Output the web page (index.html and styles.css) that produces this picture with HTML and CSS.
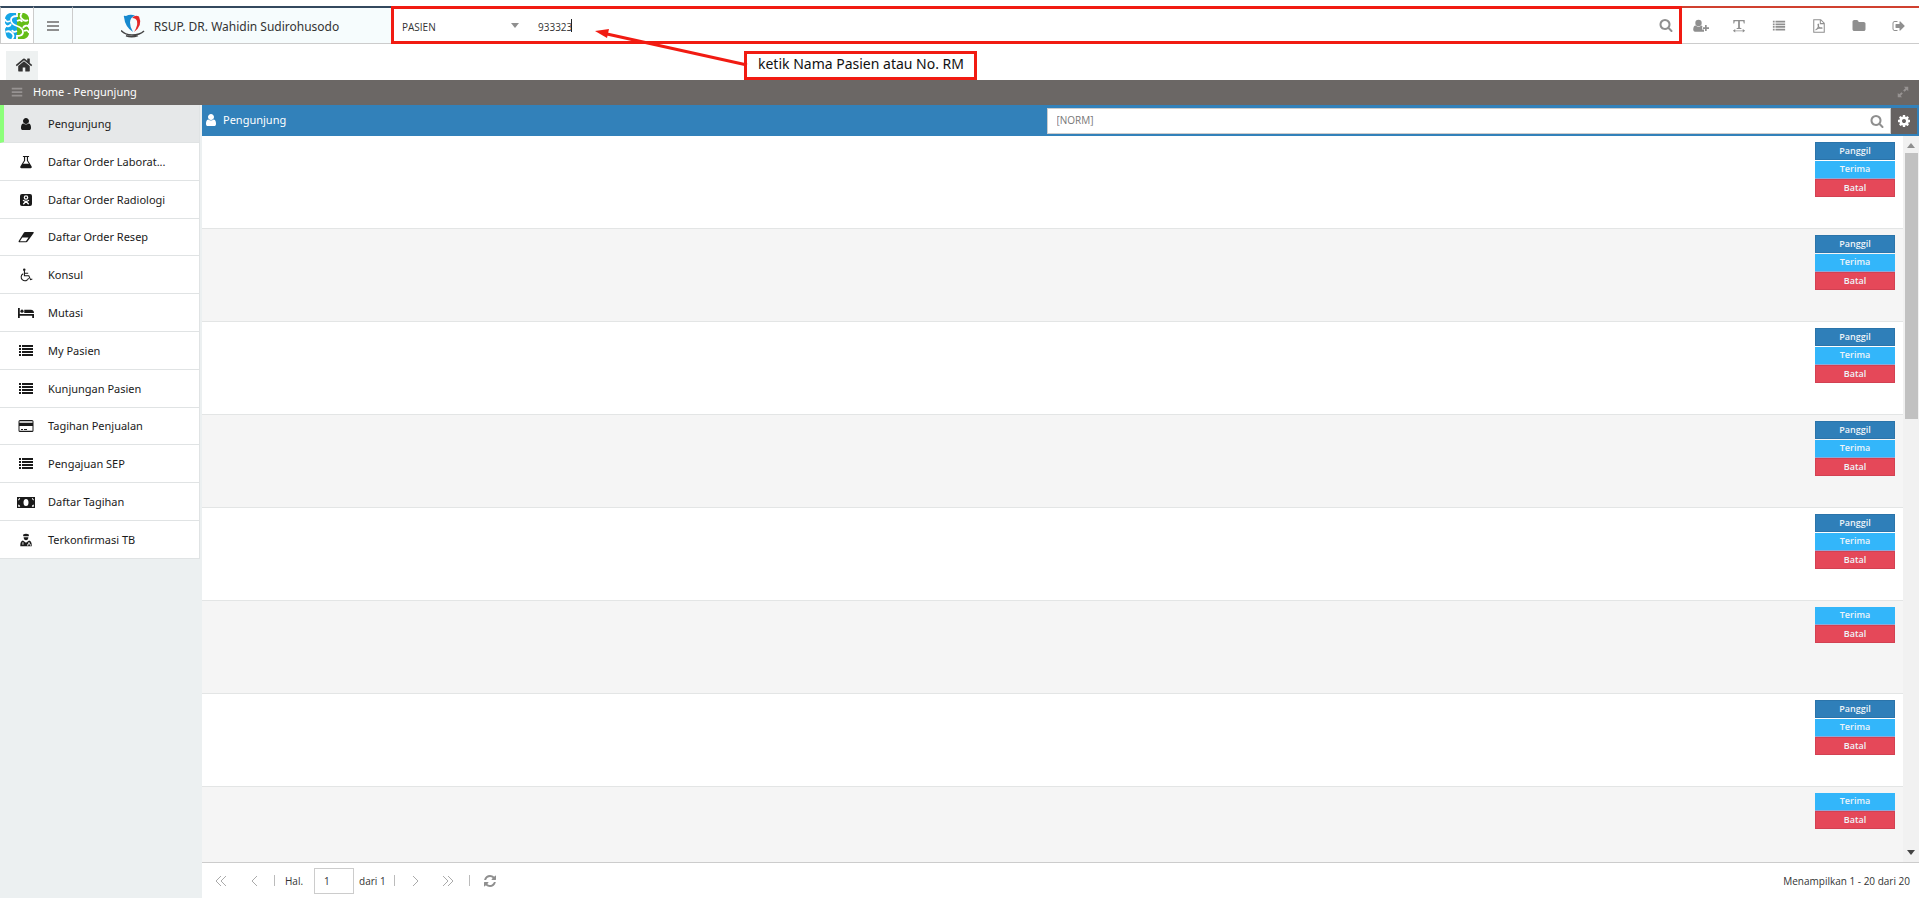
FILE: index.html
```html
<!DOCTYPE html>
<html lang="id">
<head>
<meta charset="utf-8">
<title>Home - Pengunjung</title>
<link rel="stylesheet" href="styles.css">
</head>
<body>
<svg class="sprite" aria-hidden="true">
  <symbol id="user" viewBox="0 0 1792 1792"><path d="M1536 1399q0 109-62.5 187t-150.5 78h-854q-88 0-150.5-78t-62.5-187q0-85 8.5-160.5t31.5-152 58.5-131 94-89 134.5-34.5q131 128 313 128t313-128q76 0 134.5 34.5t94 89 58.5 131 31.5 152 8.5 160.5zm-256-887q0 159-112.5 271.5t-271.5 112.5-271.5-112.5-112.5-271.5 112.5-271.5 271.5-112.5 271.5 112.5 112.5 271.5z"/></symbol>
  <symbol id="search" viewBox="0 0 1792 1792"><path d="M1216 832q0-185-131.5-316.5t-316.5-131.5-316.5 131.5-131.5 316.5 131.5 316.5 316.5 131.5 316.5-131.5 131.5-316.5zm512 832q0 52-38 90t-90 38q-54 0-90-38l-343-342q-179 124-399 124-143 0-273.5-55.5t-225-150-150-225-55.5-273.5 55.5-273.5 150-225 225-150 273.5-55.5 273.5 55.5 225 150 150 225 55.5 273.5q0 220-124 399l343 343q37 37 37 90z"/></symbol>
  <symbol id="home" viewBox="0 0 1792 1792"><path d="M1472 992v480q0 26-19 45t-45 19h-384v-384h-256v384h-384q-26 0-45-19t-19-45v-480q0-1 .5-3t.5-3l575-474 575 474q1 2 1 6zm223-69l-62 74q-8 9-21 11h-3q-13 0-21-7l-692-577-692 577q-12 8-24 7-13-2-21-11l-62-74q-8-10-7-23.5t11-21.5l719-599q32-26 76-26t76 26l244 204v-195q0-14 9-23t23-9h192q14 0 23 9t9 23v408l219 182q10 8 11 21.5t-7 23.5z"/></symbol>
  <symbol id="cog" viewBox="0 0 1792 1792"><path d="M1152 896q0-106-75-181t-181-75-181 75-75 181 75 181 181 75 181-75 75-181zm512-109v222q0 12-8 23t-20 13l-185 28q-19 54-39 91 35 50 107 138 10 12 10 25t-9 23q-27 37-99 108t-94 71q-12 0-26-9l-138-108q-44 23-91 38-16 136-29 186-7 28-36 28h-222q-14 0-24.5-8.5t-11.5-21.5l-28-184q-49-16-90-37l-141 107q-10 9-25 9-14 0-25-11-126-114-165-168-7-10-7-23 0-12 8-23 15-21 51-66.5t54-70.5q-27-50-41-99l-183-27q-13-2-21-12.5t-8-23.5v-222q0-12 8-23t19-13l186-28q14-46 39-92-40-57-107-138-10-12-10-24 0-10 9-23 26-36 98.5-107.5t94.5-71.5q13 0 26 10l138 107q44-23 91-38 16-136 29-186 7-28 36-28h222q14 0 24.5 8.5t11.5 21.5l28 184q49 16 90 37l142-107q9-9 24-9 13 0 25 10 129 119 165 170 7 8 7 22 0 12-8 23-15 21-51 66.5t-54 70.5q26 50 41 98l183 28q13 2 21 12.5t8 23.5z"/></symbol>
  <symbol id="refresh" viewBox="0 0 1792 1792"><path d="M1639 1056q0 5-1 7-64 268-268 434.5t-478 166.5q-146 0-282.5-55t-243.5-157l-129 129q-19 19-45 19t-45-19-19-45v-448q0-26 19-45t45-19h448q26 0 45 19t19 45-19 45l-137 137q71 66 161 102t187 36q134 0 250-65t186-179q11-17 53-117 8-23 30-23h192q13 0 22.5 9.5t9.5 22.5zm25-800v448q0 26-19 45t-45 19h-448q-26 0-45-19t-19-45 19-45l138-138q-148-137-349-137-134 0-250 65t-186 179q-11 17-53 117-8 23-30 23h-199q-13 0-22.5-9.5t-9.5-22.5v-7q65-268 270-434.5t480-166.5q146 0 284 55.5t245 156.5l130-129q19-19 45-19t45 19 19 45z"/></symbol>
  <symbol id="folder" viewBox="0 0 1792 1792"><path d="M1728 608v704q0 92-66 158t-158 66h-1216q-92 0-158-66t-66-158v-960q0-92 66-158t158-66h320q92 0 158 66t66 158v32h672q92 0 158 66t66 158z"/></symbol>
  <symbol id="signout" viewBox="0 0 1792 1792"><path d="M704 1440q0 4 1 20t.5 26.5-3 23.5-10 19.5-20.5 6.5h-320q-119 0-203.5-84.5t-84.5-203.5v-704q0-119 84.5-203.5t203.5-84.5h320q13 0 22.5 9.5t9.5 22.5q0 4 1 20t.5 26.5-3 23.5-10 19.5-20.5 6.5h-320q-66 0-113 47t-47 113v704q0 66 47 113t113 47h312l11.5 1 11.5 3 8 5.5 7 9 2 13.5zm928-544q0 26-19 45l-544 544q-19 19-45 19t-45-19-19-45v-288h-448q-26 0-45-19t-19-45v-384q0-26 19-45t45-19h448v-288q0-26 19-45t45-19 45 19l544 544q19 19 19 45z"/></symbol>
  <symbol id="bars" viewBox="0 0 16 16"><path d="M2 3h12v2H2zM2 7h12v2H2zM2 11h12v2H2z"/></symbol>
  <symbol id="list" viewBox="0 0 16 16"><path d="M1 2h2v2H1zM4 2h11v2H4zM1 5h2v2H1zM4 5h11v2H4zM1 8h2v2H1zM4 8h11v2H4zM1 11h2v2H1zM4 11h11v2H4z"/></symbol>
  <symbol id="userplus" viewBox="0 0 16 16"><circle cx="5.500" cy="5" r="3.200"/><path d="M2.700 7.500Q5.500 10 8.300 7.500q1 .2 1.500 1.200H9v2.800h2v2.300H1.800Q.2 13.500.2 11.500.4 7.700 2.700 7.500zM12 7h1.700v2.200H16v1.700h-2.300V13H12v-2.100H9.800V9.200H12z"/></symbol>
  <symbol id="textwidth" viewBox="0 0 16 16"><path d="M1.500 1h13v4h-1l-.7-2.300H9V10l1.800.5v.9H5.200v-.9L7 10V2.700H3.200L2.500 5h-1zM1 13.500l2.700-2V13h8.600v-1.500l2.700 2-2.700 2V14H3.700v1.500z"/></symbol>
  <symbol id="pdf" viewBox="0 0 16 16"><path fill="none" stroke="currentColor" stroke-width="1.200" d="M2 .8h8l4 4V15.200H2zM9.500 1v4.300h4"/><path fill="none" stroke="currentColor" stroke-width="1.200" d="M4 12.500c2-.7 4-4 3.500-6.500-.8-.8-1 .8 0 2.500s2.500 2.500 4 2c.3-1-3.500-.8-6 1"/></symbol>
  <symbol id="expand" viewBox="0 0 16 16"><path d="M9 2h5v5l-1.700-1.700L9.800 7.800 8.200 6.200l2.500-2.500zM2 9l1.700 1.700 2.500-2.500 1.600 1.600-2.500 2.500L7 14H2z"/></symbol>
  <symbol id="flask" viewBox="0 0 16 16"><path fill-rule="evenodd" d="M4.500 1h7v1.200h-1.200v4L14.500 13q.6 2-1.200 2H2.700Q.9 15 1.500 13l4.200-6.800v-4H4.500zM7 2.200v4.300L4.700 10h6.600L9 6.500V2.200z"/></symbol>
  <symbol id="radiology" viewBox="0 0 16 16"><path d="M4 2h8q2 0 2 2v8q0 2-2 2H4q-2 0-2-2V4q0-2 2-2z"/><circle cx="8" cy="5.500" r="1.700" fill="none" stroke="#fff" stroke-width="1.200"/><path fill="none" stroke="#fff" stroke-width="1.300" d="M5 8.300q3 2 6 0M8 9.300 5.300 12.200M8 9.300l2.700 2.900"/></symbol>
  <symbol id="eraser" viewBox="0 0 16 16"><path fill-rule="evenodd" d="M7 3h8.500q.5.600 0 1.300L9.500 12.500q-.5.700-1.300.7H1q-.8-.6-.3-1.300L6 3.600Q6.300 3 7 3zM4.300 8.500 1.900 12.200h6l2.600-3.700z"/></symbol>
  <symbol id="wheelchair" viewBox="0 0 16 16"><circle cx="6" cy="2" r="1.400"/><path fill="none" stroke="currentColor" stroke-width="1.200" d="M6.200 3v5.800h5l2 4.500 2-.8M6.200 6h4.300M4.800 6.500A4.300 4.300 0 1 0 10.900 11.500"/></symbol>
  <symbol id="bed" viewBox="0 0 18 16"><path d="M0 2.500h2V9h16v4.500h-2V11H2v2.500H0z"/><circle cx="4.500" cy="6" r="1.800"/><path d="M7 4.300h7.500Q18 4.800 18 8H7z"/></symbol>
  <symbol id="card" viewBox="0 0 16 16"><path fill-rule="evenodd" d="M2 2h12q1.500 0 1.500 1.500v9Q15.500 14 14 14H2Q.5 14 .5 12.500v-9Q.5 2 2 2zM1.500 3.200v1.600h13V3.200zM1.500 8v4.800h13V8zM3 11h2v1H3zM6 11h3v1H6z"/></symbol>
  <symbol id="money" viewBox="0 0 18 16"><path fill-rule="evenodd" d="M0 3h18v11H0zM2.500 4 1.200 5.500v1q1.500-.5 2-2.500zM15.500 4l1.300 1.500v1q-1.500-.5-2-2.500zM1.200 10.500v2.300h2q0-1.800-2-2.300zM16.800 10.500v2.300h-2q0-1.800 2-2.300zM9 5Q6.500 5 6.500 8.500T9 12t2.500-3.500T9 5z"/></symbol>
  <symbol id="medic" viewBox="0 0 16 16"><path d="M4.500 2Q8-.5 11.500 2L11 3.800H5z"/><path d="M5.300 4.800h5.400Q10.500 8.300 8 8.300T5.300 4.800z"/><path fill-rule="evenodd" d="M4.500 8.500 8 11l3.500-2.500q3 1 3 5V15h-13v-1.500q0-4 3-5zM4 10.500v3h1v-3zM10.800 10.500v1.200l-1.300 1.500v1.300h1v-1l1-.8 1 .8v1h.9v-1.300L12 11.700v-1.200z"/></symbol>
</svg>

<header class="topbar">
  <a class="brand-mark" href="#" aria-label="Beranda">
    <svg viewBox="0 0 26 28" class="swirl">
      <path fill="#16a6e6" d="M6 1h6l1 1v24l-1 1H7q-4 0-5-4l-1-6 2-3-2-3V6q1-4 5-5z"/>
      <path fill="#65bd16" d="M14 1h6q4 1 5 5v5l-2 3 2 3v5q-1 4-5 5h-7V2z"/>
      <g fill="none" stroke="#fff" stroke-width="1.800">
        <path d="M13 0v4q-6 0-6 4t6 6q6 2 6 6t-6 4v4"/>
        <path d="M0 13q5 3 7-1M26 15q-5-3-7 1"/>
        <path d="M1 7q1 4 5 2M25 21q-1-4-5-2M18 1q-3 3 0 6t6 1M8 27q3-3 0-6t-6-1"/>
        <path d="M13 9q4-2 5 1M13 19q-4 2-5-1"/>
      </g>
    </svg>
  </a>
  <button class="menu-toggle" type="button" aria-label="Menu"><svg class="icon icon-lg"><use href="#bars"/></svg></button>
  <div class="brand">
    <svg viewBox="0 0 24 24" class="crest">
      <path fill="#1689cf" d="M3 3Q2 1 5 2q4-2 9-.5-5 2-5 7 0 5 3 9.500Q4 13 3 3z"/>
      <path fill="#e32a2a" d="M11 4q3-3.500 7-1.500 4 9-5 15.500 4-6 3-11-1-3-5-3z"/>
      <path fill="none" stroke="#444" stroke-width="1.500" d="M0 16.500q4 4.500 11 4.500 8 0 12-4M5 21.800q6 2 12-.3"/>
    </svg>
    <span>RSUP. DR. Wahidin Sudirohusodo</span>
  </div>
  <form class="search">
    <select class="search-kind" aria-label="Jenis pencarian"><option>PASIEN</option></select>
    <svg class="drop" viewBox="0 0 8 5"><path d="M0 0h8L4 5z"/></svg>
    <div class="search-field">
      <input class="search-input" type="text" value="933323" aria-label="Nama pasien atau No. RM">
      <span class="caret"></span>
    </div>
    <button class="search-go" type="button" aria-label="Cari"><svg class="icon icon-md"><use href="#search"/></svg></button>
    <div class="callout">
      <span>ketik Nama Pasien atau No. RM</span>
      <svg class="pointer" viewBox="0 0 150 36"><path d="M150 34 10 3" stroke="#f11b12" stroke-width="3"/><path d="M-2 0 12-2 10 7z" fill="#f11b12"/></svg>
    </div>
  </form>
  <nav class="tools">
    <button type="button" aria-label="Pasien baru"><svg class="icon icon-lg"><use href="#userplus"/></svg></button>
    <button type="button" aria-label="Lebar teks"><svg class="icon icon-md"><use href="#textwidth"/></svg></button>
    <button type="button" aria-label="Daftar"><svg class="icon icon-md"><use href="#list"/></svg></button>
    <button type="button" aria-label="PDF"><svg class="icon icon-md"><use href="#pdf"/></svg></button>
    <button type="button" aria-label="Berkas"><svg class="icon icon-md"><use href="#folder"/></svg></button>
    <button type="button" aria-label="Keluar"><svg class="icon icon-md"><use href="#signout"/></svg></button>
  </nav>
</header>

<div class="tabs"><a class="tab" href="#" aria-label="Home"><svg class="icon icon-xl"><use href="#home"/></svg></a></div>

<div class="titlebar">
  <svg class="icon icon-md dim"><use href="#bars"/></svg>
  <h1>Home - Pengunjung</h1>
  <svg class="icon icon-md dim"><use href="#expand"/></svg>
</div>

<div class="workspace">
  <nav class="sidebar">
    <a class="item active" href="#"><svg class="icon icon-md"><use href="#user"/></svg><span>Pengunjung</span></a>
    <a class="item" href="#"><svg class="icon icon-md"><use href="#flask"/></svg><span>Daftar Order Laborat...</span></a>
    <a class="item" href="#"><svg class="icon icon-lg"><use href="#radiology"/></svg><span>Daftar Order Radiologi</span></a>
    <a class="item" href="#"><svg class="icon icon-lg"><use href="#eraser"/></svg><span>Daftar Order Resep</span></a>
    <a class="item" href="#"><svg class="icon icon-md"><use href="#wheelchair"/></svg><span>Konsul</span></a>
    <a class="item" href="#"><svg class="icon icon-lg"><use href="#bed"/></svg><span>Mutasi</span></a>
    <a class="item" href="#"><svg class="icon icon-lg"><use href="#list"/></svg><span>My Pasien</span></a>
    <a class="item" href="#"><svg class="icon icon-lg"><use href="#list"/></svg><span>Kunjungan Pasien</span></a>
    <a class="item" href="#"><svg class="icon icon-lg"><use href="#card"/></svg><span>Tagihan Penjualan</span></a>
    <a class="item" href="#"><svg class="icon icon-lg"><use href="#list"/></svg><span>Pengajuan SEP</span></a>
    <a class="item" href="#"><svg class="icon icon-xl"><use href="#money"/></svg><span>Daftar Tagihan</span></a>
    <a class="item" href="#"><svg class="icon icon-md"><use href="#medic"/></svg><span>Terkonfirmasi TB</span></a>
  </nav>

  <main class="panel">
    <div class="panel-head">
      <h2><svg class="icon icon-md"><use href="#user"/></svg>Pengunjung</h2>
      <div class="filter">
        <input type="text" placeholder="[NORM]" aria-label="Norm">
        <button class="filter-go" type="button" aria-label="Cari"><svg class="icon icon-md"><use href="#search"/></svg></button>
      </div>
      <button class="gear" type="button" aria-label="Pengaturan"><svg class="icon icon-md"><use href="#cog"/></svg></button>
    </div>
    <div class="list-area">
      <div class="list">
        <div class="row"><button class="btn call">Panggil</button><button class="btn accept">Terima</button><button class="btn cancel">Batal</button></div>
        <div class="row"><button class="btn call">Panggil</button><button class="btn accept">Terima</button><button class="btn cancel">Batal</button></div>
        <div class="row"><button class="btn call">Panggil</button><button class="btn accept">Terima</button><button class="btn cancel">Batal</button></div>
        <div class="row"><button class="btn call">Panggil</button><button class="btn accept">Terima</button><button class="btn cancel">Batal</button></div>
        <div class="row"><button class="btn call">Panggil</button><button class="btn accept">Terima</button><button class="btn cancel">Batal</button></div>
        <div class="row"><button class="btn accept">Terima</button><button class="btn cancel">Batal</button></div>
        <div class="row"><button class="btn call">Panggil</button><button class="btn accept">Terima</button><button class="btn cancel">Batal</button></div>
        <div class="row"><button class="btn accept">Terima</button><button class="btn cancel">Batal</button></div>
      </div>
      <div class="scrollbar">
        <svg class="drop" viewBox="0 0 8 5"><path d="M0 5h8L4 0z"/></svg>
        <div class="thumb"></div>
        <svg class="drop dark" viewBox="0 0 8 5"><path d="M0 0h8L4 5z"/></svg>
      </div>
    </div>
    <footer class="pager">
      <button type="button" aria-label="Halaman pertama"><svg class="chev" viewBox="0 0 12 12"><path d="M6 1 1 6l5 5M11 1 6 6l5 5"/></svg></button>
      <button type="button" aria-label="Sebelumnya"><svg class="chev" viewBox="0 0 12 12"><path d="M9 1 4 6l5 5"/></svg></button>
      <span class="sep"></span>
      <label for="page">Hal.</label>
      <input id="page" type="text" value="1">
      <span>dari 1</span>
      <span class="sep"></span>
      <button type="button" aria-label="Berikutnya"><svg class="chev" viewBox="0 0 12 12"><path d="m4 1 5 5-5 5"/></svg></button>
      <button type="button" aria-label="Halaman terakhir"><svg class="chev" viewBox="0 0 12 12"><path d="m1 1 5 5-5 5M6 1l5 5-5 5"/></svg></button>
      <span class="sep"></span>
      <button type="button" aria-label="Muat ulang"><svg class="icon icon-md"><use href="#refresh"/></svg></button>
      <span class="count">Menampilkan 1 - 20 dari 20</span>
    </footer>
  </main>
</div>
</body>
</html>
```
FILE: styles.css
```css
* { box-sizing: border-box; }
html, body { height: 100%; }
body {
  margin: 0;
  padding-top: 6px;
  display: flex;
  flex-direction: column;
  overflow: hidden;
  background: #fff;
  color: #333;
  font: 11px/16px "Open Sans", "Noto Sans", sans-serif;
}
button, input, select { font: inherit; color: inherit; border: 0; padding: 0; margin: 0; background: none; border-radius: 0; outline: 0; }
button { display: flex; align-items: center; justify-content: center; }
a { color: inherit; text-decoration: none; }
h1, h2 { margin: 0; font: inherit; }
.sprite { display: none; }
.icon { fill: currentColor; flex: none; width: 14px; height: 14px; }
.icon-lg { width: 16px; height: 16px; }
.icon-xl { width: 18px; height: 18px; }
.drop { width: 8px; height: 5px; fill: #8f8f8f; flex: none; }
.drop.dark { fill: #444; }

.topbar { display: flex; height: 38px; flex: none; }
.brand-mark, .menu-toggle, .brand {
  display: flex;
  align-items: center;
  justify-content: center;
  border: 1px solid #ccc;
  border-top: 2px solid #34495e;
  border-left: 0;
  background: #f6fcfd;
}
.brand-mark { width: 34px; background: #fff; border-left: 1px solid #ccc; }
.swirl { width: 26px; height: 28px; }
.menu-toggle { width: 39px; color: #8f8f8f; }
.brand { width: 318px; padding-right: 4px; border-right: 0; gap: 9px; font: 12px/18px "Noto Sans", "Open Sans", sans-serif; }
.brand span { padding-top: 2px; }
.crest { width: 24px; height: 24px; }
.search {
  position: relative;
  flex: 1;
  display: flex;
  align-items: center;
  border: 3px solid #f11b12;
}
.search-kind { width: 109px; height: 20px; margin-left: 8px; padding-top: 3px; appearance: none; font-size: 10px; }
.search-field { position: relative; flex: 1; margin-left: 19px; }
.search-input { width: 100%; padding-top: 3px; font-size: 10px; }
.caret { position: absolute; left: 33px; top: 3px; width: 1px; height: 13px; background: #222; }
.search-go { width: 26px; color: #8f8f8f; }
.callout {
  position: absolute;
  left: 350px;
  top: 42px;
  z-index: 2;
  padding: 1px 10px 4px 11px;
  border: 3px solid #f11b12;
  background: #fff;
  color: #111;
  font: 14px/18px "Noto Sans", "Open Sans", sans-serif;
  white-space: nowrap;
}
.pointer { position: absolute; right: 100%; bottom: 10px; width: 150px; height: 36px; overflow: visible; }
.tools { display: flex; border-top: 2px solid #d0402f; border-bottom: 1px solid #ccc; color: #8f8f8f; }
.tools button { width: 40px; }
.tools button:first-child { width: 37px; }

.tabs { flex: none; height: 36px; padding: 7px 6px 0; }
.tab { display: flex; align-items: center; justify-content: center; width: 32px; height: 29px; padding: 0 0 1px 3px; background: #eef1f1; }

.titlebar { flex: none; display: flex; align-items: center; gap: 9px; height: 25px; padding: 0 9px 1px 10px; background: #6b6765; color: #fff; font-family: "Noto Sans", "Open Sans", sans-serif; }
.titlebar h1 { flex: 1; }
.dim { color: #979392; }

.workspace { flex: 1; min-height: 0; display: flex; background: #ecf0f1; }
.sidebar { width: 200px; margin-right: 2px; flex: none; color: #1a1a1a; font-family: "Noto Sans", "Open Sans", sans-serif; }
.item {
  display: grid;
  grid-template-columns: 45px 1fr;
  align-items: center;
  height: 38px;
  padding-left: 3px;
  border-bottom: 1px solid #e0e3e4;
  border-right: 1px solid #e0e3e4;
  background: #fff;
}
.item:nth-child(5n+4) { height: 37px; }
.item .icon { justify-self: center; }
.item.active { grid-template-columns: 44px 1fr; padding-left: 0; border-left: 4px solid #8cff7a; background: #e6e8e9; }

.panel { flex: 1; min-width: 0; display: flex; flex-direction: column; background: #fff; }
.panel-head { flex: none; display: flex; height: 31px; padding: 3px 2px 2px; background: #3281ba; color: #fff; }
.panel-head h2 { flex: 1; display: flex; align-items: center; gap: 5px; padding-bottom: 2px; font-family: "Noto Sans", "Open Sans", sans-serif; }
.filter { flex: 1; display: flex; border: 1px solid #ccc; background: #fff; color: #777; }
.filter input { flex: 1; padding-left: 9px; padding-bottom: 2px; font-size: 10px; }
.filter input::placeholder { color: #777; opacity: 1; }
.filter-go { width: 26px; color: #8f8f8f; }
.gear { width: 26px; background: #666261; }

.list-area { flex: 1; min-height: 0; display: flex; }
.list { flex: 1; overflow: hidden; }
.row { display: flex; flex-direction: column; align-items: flex-end; height: 93px; padding: 6px 8px 0; border-bottom: 1px solid #e3e5e5; }
.row:nth-child(even) { background: #f5f5f5; }
.btn { width: 80px; height: 18px; padding-bottom: 1px; font-size: 9px; font-weight: 600; line-height: 14px; color: #eef4f8; }
.call { background: #2f7fb9; border: 1px solid #2b74aa; margin-bottom: 1px; }
.accept { background: #33b6fa; border-bottom: 1px solid #8fa8d8; }
.cancel { background: #e54859; border: 1px solid #d24152; }
.scrollbar { width: 16px; display: flex; flex-direction: column; align-items: center; padding: 7px 0; background: #f1f1f1; }
.thumb { width: 13px; height: 266px; margin: 5px 0 auto; background: #c1c1c1; }

.pager { flex: none; display: flex; align-items: center; height: 36px; padding: 0 9px 0 2px; border-top: 1px solid #ccc; font-size: 10px; }
.pager button { width: 33px; color: #8f8f8f; }
.chev { width: 12px; height: 12px; fill: none; stroke: #aaa; stroke-width: 1; }
.sep { width: 1px; height: 11px; margin: 0 4px; background: #bbb; }
.pager label { margin: 0 11px 0 6px; }
.pager input { width: 40px; height: 26px; margin-right: 5px; padding-left: 9px; border: 1px solid #ccc; }
.pager input + span { margin-right: 4px; }
.count { margin-left: auto; }
```
